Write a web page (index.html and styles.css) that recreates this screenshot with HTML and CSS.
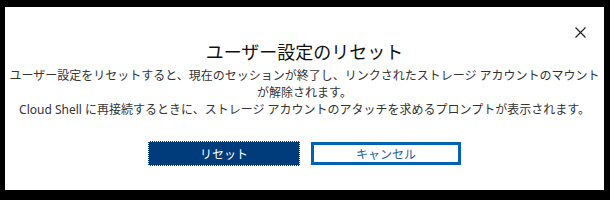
FILE: index.html
```html
<!DOCTYPE html>
<html lang="ja">
<head>
<meta charset="utf-8">
<title>ユーザー設定のリセット</title>
<link rel="stylesheet" href="styles.css">
</head>
<body>
<div class="dialog">
  <div class="dialog-head">
    <button class="close" aria-label="閉じる">
      <svg width="11" height="11" viewBox="0 0 11 11"><path d="M0.5 0.5 L10.5 10.5 M10.5 0.5 L0.5 10.5" stroke="#1b1b1b" stroke-width="1.1" fill="none"/></svg>
    </button>
  </div>
  <h1 class="title">ユーザー設定のリセット</h1>
  <p class="message">ユーザー設定をリセットすると、現在のセッションが終了し、リンクされたストレージ アカウントのマウント<br>が解除されます。<br>Cloud Shell に再接続するときに、ストレージ アカウントのアタッチを求めるプロンプトが表示されます。</p>
  <div class="actions">
    <button class="btn btn-primary">リセット</button>
    <button class="btn btn-secondary">キャンセル</button>
  </div>
</div>
</body>
</html>
```
FILE: styles.css
```css
html, body {
  margin: 0;
  padding: 0;
  background: #000;
}
body {
  padding: 7px 6px 10px 5px;
  font-family: "Noto Sans", "Noto Sans CJK JP", sans-serif;
}
.dialog {
  width: 599px;
  height: 183px;
  background: #fff;
  box-sizing: border-box;
  padding: 18px 18px 0 0;
  display: flex;
  flex-direction: column;
}
.dialog-head {
  display: flex;
  justify-content: flex-end;
  height: 14px;
}
.close {
  border: 0;
  background: none;
  padding: 2px 0 0 0;
  margin: 0;
  width: 11px;
  height: 14px;
  display: flex;
  align-items: flex-start;
  cursor: pointer;
}
.title {
  margin: 0 -18px 4px 0;
  font-size: 18px;
  line-height: 24px;
  font-weight: 400;
  color: #111;
  text-align: center;
  font-family: "Noto Sans CJK JP", sans-serif;
}
.message {
  margin: 0 -18px 0 0;
  font-size: 12px;
  line-height: 17px;
  color: #333;
  text-align: center;
  white-space: nowrap;
}
.actions {
  margin: 23px -18px 0 0;
  display: flex;
  justify-content: center;
  align-items: center;
  gap: 11px;
}
.btn {
  font-family: "Noto Sans CJK JP", sans-serif;
  font-size: 12px;
  line-height: 1;
  padding: 0;
  margin: 0;
  box-sizing: border-box;
  cursor: pointer;
}
.btn-primary {
  width: 152px;
  height: 25px;
  background: #003c7c;
  color: #fff;
  border: 1px dotted #fff;
}
.btn-secondary {
  width: 150px;
  height: 23px;
  background: #fff;
  color: #1c5ea8;
  border: 3px solid #0062b0;
}
```
